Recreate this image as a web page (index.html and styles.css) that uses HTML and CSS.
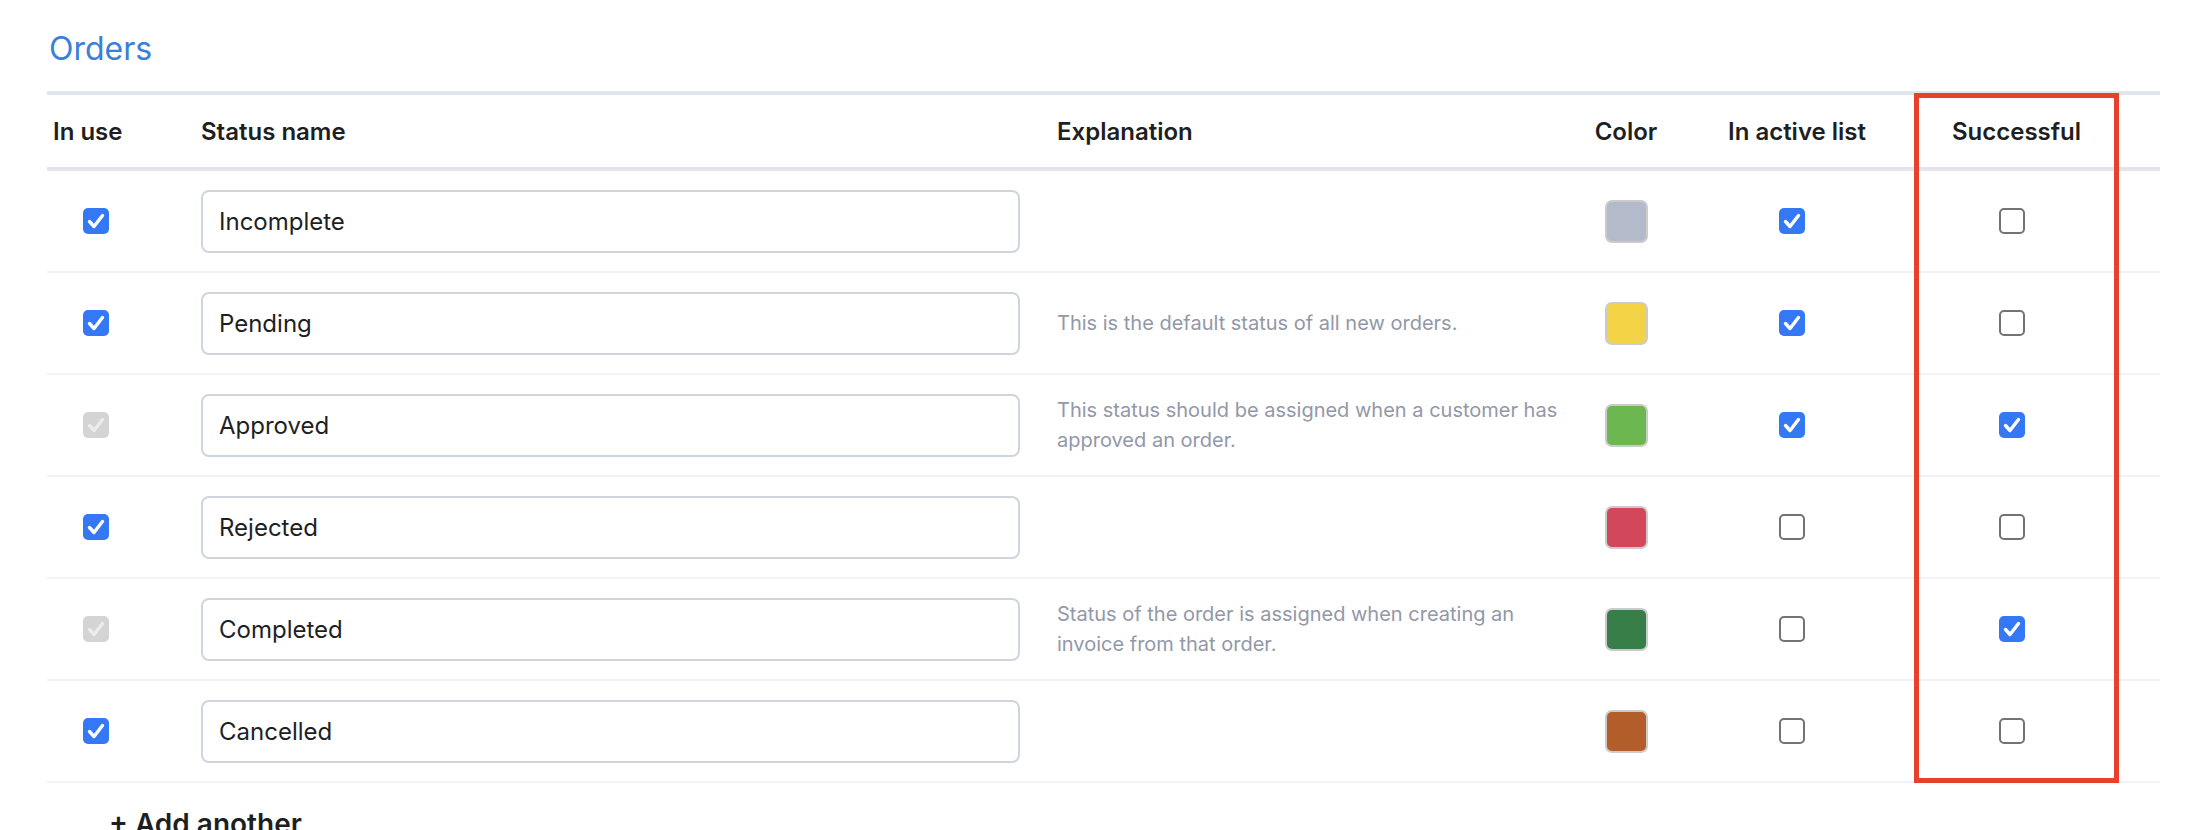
FILE: index.html
```html
<!DOCTYPE html>
<html lang="en">
<head>
  <meta charset="UTF-8">
  <meta name="viewport" content="width=device-width, initial-scale=1.0">
  <title>Order statuses</title>
  <link rel="stylesheet" href="styles.css">
</head>
<body>
  <div class="orders">
    <h1 class="title">Orders</h1>

    <div class="status-table">
      <!-- Encabezado -->
      <div class="row row-head">
        <div class="cell head-left head-inuse">In use</div>
        <div class="cell head-left">Status name</div>
        <div class="cell head-left">Explanation</div>
        <div class="cell head-center">Color</div>
        <div class="cell head-center">In active list</div>
        <div class="cell head-center">Successful</div>
        <div class="cell"></div>
      </div>

      <div class="row">
        <div class="cell cell-inuse"><span class="cb cb-on"><svg viewBox="0 0 26 26"><polyline points="6.5,13.5 11,18.5 19.5,7.5"/></svg></span></div>
        <div class="cell"><input class="name-input" type="text" value="Incomplete"></div>
        <div class="cell explain"></div>
        <div class="cell cell-center"><span class="swatch" style="background:#b3bbcb"></span></div>
        <div class="cell cell-center"><span class="cb cb-on cb-shift"><svg viewBox="0 0 26 26"><polyline points="6.5,13.5 11,18.5 19.5,7.5"/></svg></span></div>
        <div class="cell cell-center"><span class="cb cb-off cb-shift"></span></div>
        <div class="cell"></div>
      </div>

      <div class="row">
        <div class="cell cell-inuse"><span class="cb cb-on"><svg viewBox="0 0 26 26"><polyline points="6.5,13.5 11,18.5 19.5,7.5"/></svg></span></div>
        <div class="cell"><input class="name-input" type="text" value="Pending"></div>
        <div class="cell explain">This is the default status of all new orders.</div>
        <div class="cell cell-center"><span class="swatch" style="background:#f4d246"></span></div>
        <div class="cell cell-center"><span class="cb cb-on cb-shift"><svg viewBox="0 0 26 26"><polyline points="6.5,13.5 11,18.5 19.5,7.5"/></svg></span></div>
        <div class="cell cell-center"><span class="cb cb-off cb-shift"></span></div>
        <div class="cell"></div>
      </div>

      <div class="row">
        <div class="cell cell-inuse"><span class="cb cb-disabled"><svg viewBox="0 0 26 26"><polyline points="6.5,13.5 11,18.5 19.5,7.5"/></svg></span></div>
        <div class="cell"><input class="name-input" type="text" value="Approved"></div>
        <div class="cell explain">This status should be assigned when a customer has approved an order.</div>
        <div class="cell cell-center"><span class="swatch" style="background:#6cb74f"></span></div>
        <div class="cell cell-center"><span class="cb cb-on cb-shift"><svg viewBox="0 0 26 26"><polyline points="6.5,13.5 11,18.5 19.5,7.5"/></svg></span></div>
        <div class="cell cell-center"><span class="cb cb-on cb-shift"><svg viewBox="0 0 26 26"><polyline points="6.5,13.5 11,18.5 19.5,7.5"/></svg></span></div>
        <div class="cell"></div>
      </div>

      <div class="row">
        <div class="cell cell-inuse"><span class="cb cb-on"><svg viewBox="0 0 26 26"><polyline points="6.5,13.5 11,18.5 19.5,7.5"/></svg></span></div>
        <div class="cell"><input class="name-input" type="text" value="Rejected"></div>
        <div class="cell explain"></div>
        <div class="cell cell-center"><span class="swatch" style="background:#d2475a"></span></div>
        <div class="cell cell-center"><span class="cb cb-off cb-shift"></span></div>
        <div class="cell cell-center"><span class="cb cb-off cb-shift"></span></div>
        <div class="cell"></div>
      </div>

      <div class="row">
        <div class="cell cell-inuse"><span class="cb cb-disabled"><svg viewBox="0 0 26 26"><polyline points="6.5,13.5 11,18.5 19.5,7.5"/></svg></span></div>
        <div class="cell"><input class="name-input" type="text" value="Completed"></div>
        <div class="cell explain">Status of the order is assigned when creating an invoice from that order.</div>
        <div class="cell cell-center"><span class="swatch" style="background:#387e48"></span></div>
        <div class="cell cell-center"><span class="cb cb-off cb-shift"></span></div>
        <div class="cell cell-center"><span class="cb cb-on cb-shift"><svg viewBox="0 0 26 26"><polyline points="6.5,13.5 11,18.5 19.5,7.5"/></svg></span></div>
        <div class="cell"></div>
      </div>

      <div class="row">
        <div class="cell cell-inuse"><span class="cb cb-on"><svg viewBox="0 0 26 26"><polyline points="6.5,13.5 11,18.5 19.5,7.5"/></svg></span></div>
        <div class="cell"><input class="name-input" type="text" value="Cancelled"></div>
        <div class="cell explain"></div>
        <div class="cell cell-center"><span class="swatch" style="background:#b35d2a"></span></div>
        <div class="cell cell-center"><span class="cb cb-off cb-shift"></span></div>
        <div class="cell cell-center"><span class="cb cb-off cb-shift"></span></div>
        <div class="cell"></div>
      </div>

      <!-- Marco de resaltado sobre la columna "Successful" -->
      <div class="highlight"></div>
    </div>

    <div class="add-another">+ Add another</div>
  </div>
</body>
</html>
```

FILE: styles.css
```css
:root {
  --title-color: #3b7fda;
  --text-color: #1e1f23;
  --muted-color: #9298a8;
  --head-line: #e3e5ec;
  --row-line: #f1f2f6;
  --check-blue: #3478f6;
  --mark-red: #e8412b;
}

body {
  margin: 0;
  font-family: 'Inter', 'Noto Sans', sans-serif;
  color: var(--text-color);
  background: #fff;
}

.orders {
  padding: 29px 28px 0 47px;
}

.title {
  margin: 0 0 22px 2px;
  font-size: 32px;
  font-weight: 400;
  line-height: 40px;
  color: var(--title-color);
}

/* Tabla de estados */
.status-table {
  position: relative;
}

.row {
  display: grid;
  grid-template-columns: 154px 856px 515px 108px 234px 205px 41px;
  height: 100px;
  align-items: center;
  border-bottom: 2px solid var(--row-line);
}

.row-head {
  height: 72px;
  border-top: 4px solid var(--head-line);
  border-bottom: 4px solid var(--head-line);
  font-size: 24px;
  font-weight: 600;
}

.head-inuse {
  padding-left: 6px;
}

.head-center {
  text-align: center;
}

.cell-inuse {
  padding-left: 36px;
  display: flex;
}

.cell-center {
  display: flex;
  justify-content: center;
}

/* Casillas */
.cb {
  width: 26px;
  height: 26px;
  box-sizing: border-box;
  border-radius: 5px;
  display: flex;
  align-items: center;
  justify-content: center;
}

.cb svg {
  width: 26px;
  height: 26px;
}

.cb polyline {
  fill: none;
  stroke: #fff;
  stroke-width: 3.4;
  stroke-linecap: round;
  stroke-linejoin: round;
}

.cb-on {
  background: var(--check-blue);
}

.cb-off {
  background: #fff;
  border: 2px solid #737373;
}

.cb-disabled {
  background: #d4d4d4;
}

.cb-disabled polyline {
  stroke: #ececec;
}

.cb-shift {
  margin-right: 10px;
}

.name-input {
  width: 819px;
  height: 63px;
  box-sizing: border-box;
  border: 2px solid #d0d4df;
  border-radius: 8px;
  padding: 0 16px;
  font-family: inherit;
  font-size: 24px;
  color: var(--text-color);
  background: #fff;
  outline: none;
}

.explain {
  font-size: 20px;
  line-height: 30px;
  color: var(--muted-color);
  padding-right: 6px;
}

.swatch {
  width: 43px;
  height: 43px;
  box-sizing: border-box;
  border: 2px solid #cbcbcb;
  border-radius: 7px;
}

.highlight {
  position: absolute;
  left: 1867px;
  top: 2px;
  width: 205px;
  height: 690px;
  box-sizing: border-box;
  border: 5px solid var(--mark-red);
  pointer-events: none;
}

.add-another {
  margin-top: 24px;
  padding-left: 62px;
  font-size: 28px;
  font-weight: 600;
  line-height: 34px;
}
```
